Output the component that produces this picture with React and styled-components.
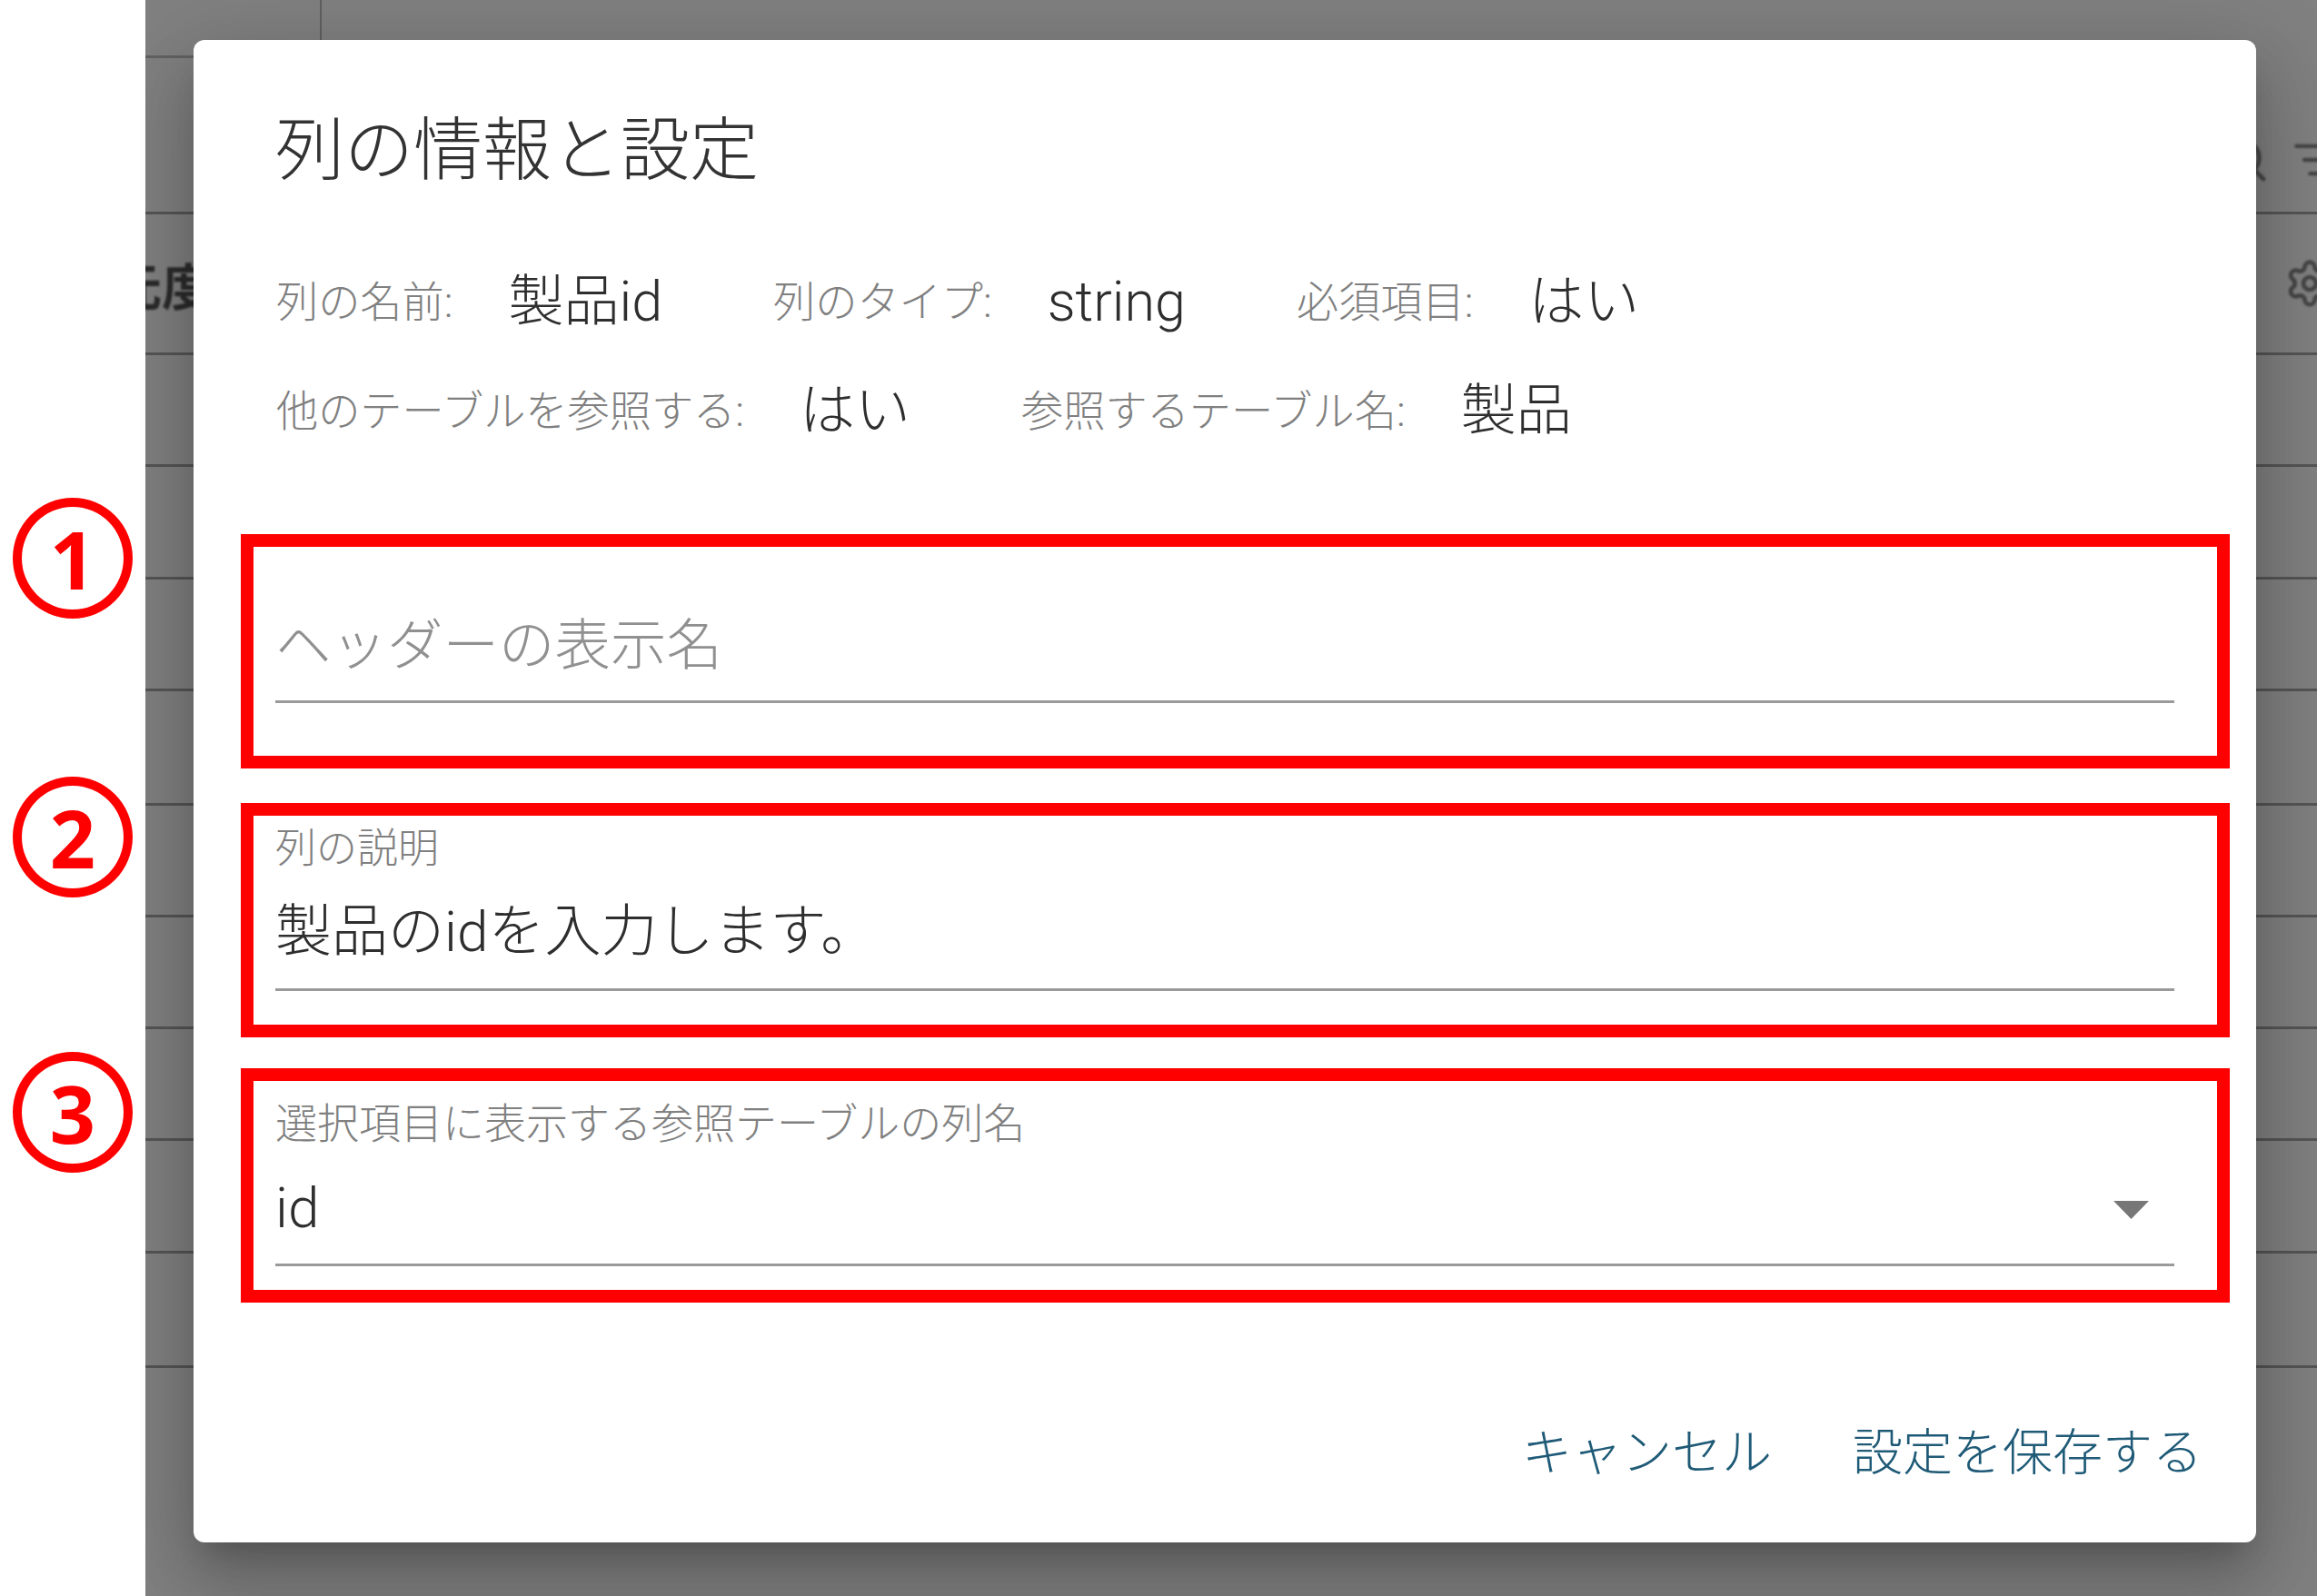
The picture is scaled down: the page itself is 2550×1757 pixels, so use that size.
import React from "react";
import styled, { createGlobalStyle } from "styled-components";
import { Search, ListFilter, Settings } from "lucide-react";

const FONT = `Roboto, "Noto Sans CJK JP", sans-serif`;

const GlobalStyle = createGlobalStyle`
  html, body {
    margin: 0;
    padding: 0;
    background: #ffffff;
  }
  #root {
    width: 2550px;
    height: 1757px;
    overflow: hidden;
  }
`;

const infoRows = [
  [
    { label: "列の名前:", value: "製品id" },
    { label: "列のタイプ:", value: "string" },
    { label: "必須項目:", value: "はい" },
  ],
  [
    { label: "他のテーブルを参照する:", value: "はい" },
    { label: "参照するテーブル名:", value: "製品" },
  ],
];

// heights of the table rows behind the dialog
const rowHeights = [123, 124, 123, 126, 123, 123, 123, 124, 126];

export default function App() {
  return (
    <Page>
      <GlobalStyle />
      <Markers>
        <Marker>1</Marker>
        <Marker $before={174}>2</Marker>
        <Marker $before={170}>3</Marker>
      </Markers>

      <Backdrop>
        <TopCell />
        <ToolRow>
          <ToolIcons>
            <Search size={56} strokeWidth={2} />
            <ListFilter size={52} strokeWidth={2} />
          </ToolIcons>
        </ToolRow>
        <HeaderRow>
          <HeaderText>元度</HeaderText>
          <GearIcon size={56} strokeWidth={2} />
        </HeaderRow>
        {rowHeights.map((h, i) => (
          <BlankRow key={i} $h={h} />
        ))}

        <Dialog>
          <Title>列の情報と設定</Title>

          <Info>
            {infoRows.map((row, i) => (
              <InfoRow key={i}>
                {row.map((item) => (
                  <InfoItem key={item.label}>
                    <InfoLabel>{item.label}</InfoLabel>
                    <InfoValue>{item.value}</InfoValue>
                  </InfoItem>
                ))}
              </InfoRow>
            ))}
          </Info>

          <Highlight>
            <Field $top={74} $bottom={25}>
              <Placeholder>ヘッダーの表示名</Placeholder>
            </Field>
          </Highlight>

          <Highlight $before={38}>
            <Field $top={12} $bottom={27}>
              <FieldLabel $after={31} $size={45}>
                列の説明
              </FieldLabel>
              <FieldValue>製品のidを入力します。</FieldValue>
            </Field>
          </Highlight>

          <Highlight $before={34}>
            <Field $top={22} $bottom={26}>
              <FieldLabel $after={33} $size={46}>
                選択項目に表示する参照テーブルの列名
              </FieldLabel>
              <SelectRow>
                <FieldValue>id</FieldValue>
                <Arrow viewBox="0 0 39 20">
                  <polygon points="0,0 39,0 19.5,20" />
                </Arrow>
              </SelectRow>
            </Field>
          </Highlight>

          <Actions>
            <ActionButton>キャンセル</ActionButton>
            <ActionButton>設定を保存する</ActionButton>
          </Actions>
        </Dialog>
      </Backdrop>
    </Page>
  );
}

const Page = styled.div`
  display: flex;
  width: 2550px;
  height: 1757px;
  font-family: ${FONT};
`;

const Markers = styled.div`
  flex: 0 0 160px;
  box-sizing: border-box;
  display: flex;
  flex-direction: column;
  padding: 548px 0 0 14px;
`;

const Marker = styled.div`
  box-sizing: border-box;
  width: 132px;
  height: 133px;
  margin-top: ${(p) => p.$before || 0}px;
  border: 10px solid #ff0000;
  border-radius: 50%;
  display: flex;
  align-items: center;
  justify-content: center;
  color: #ff0000;
  font-family: "Noto Sans", sans-serif;
  font-size: 88px;
  font-weight: 700;
  line-height: 1;
`;

const Backdrop = styled.div`
  position: relative;
  flex: 1;
  overflow: hidden;
  background: #808080;
`;

const TopCell = styled.div`
  box-sizing: border-box;
  width: 194px;
  height: 64px;
  border-right: 2px solid #5f5f5f;
  border-bottom: 3px solid #626262;
`;

const ToolRow = styled.div`
  box-sizing: border-box;
  height: 172px;
  display: flex;
  justify-content: flex-end;
  align-items: flex-end;
  padding-bottom: 29px;
  border-bottom: 3px solid #555555;
`;

const ToolIcons = styled.div`
  display: flex;
  align-items: center;
  gap: 25px;
  margin-right: -25px;
  color: #454545;
  filter: blur(1px);
`;

const HeaderRow = styled.div`
  box-sizing: border-box;
  height: 155px;
  display: flex;
  justify-content: space-between;
  align-items: center;
  border-bottom: 3px solid #555555;
`;

const HeaderText = styled.div`
  margin-left: -37px;
  color: #2b2b2b;
  font-size: 55px;
  font-weight: 700;
  filter: blur(0.8px);
`;

const GearIcon = styled(Settings)`
  margin-right: -20px;
  color: #454545;
  filter: blur(1px);
`;

const BlankRow = styled.div`
  box-sizing: border-box;
  height: ${(p) => p.$h}px;
  border-bottom: 3px solid #555555;
`;

const Dialog = styled.div`
  position: absolute;
  left: 53px;
  top: 44px;
  box-sizing: border-box;
  width: 2270px;
  height: 1654px;
  padding: 77px 29px 0 52px;
  background: #ffffff;
  border-radius: 12px;
  box-shadow: 0 22px 30px -14px rgba(0, 0, 0, 0.2),
    0 48px 76px 6px rgba(0, 0, 0, 0.14), 0 18px 92px 16px rgba(0, 0, 0, 0.12);
`;

const Title = styled.h2`
  margin: 0 0 0 38px;
  color: #333333;
  font-size: 76px;
  font-weight: 300;
  line-height: 90px;
`;

const Info = styled.div`
  display: flex;
  flex-direction: column;
  gap: 60px;
  margin: 87px 0 110px 39px;
`;

const InfoRow = styled.div`
  display: flex;
  gap: 122px;
`;

const InfoItem = styled.div`
  display: flex;
  align-items: flex-start;
  gap: 61px;
  height: 60px;
  line-height: 60px;
`;

const InfoLabel = styled.span`
  margin-top: 5px;
  color: #808080;
  font-size: 46.2px;
  font-weight: 300;
`;

const InfoValue = styled.span`
  margin-top: 4px;
  color: #2e2e2e;
  font-size: 61px;
  font-weight: 300;
`;

const Highlight = styled.div`
  box-sizing: border-box;
  height: 258px;
  margin-top: ${(p) => p.$before || 0}px;
  padding: 0 47px 0 24px;
  border: 14px solid #ff0000;
`;

const Field = styled.div`
  padding: ${(p) => p.$top}px 0 ${(p) => p.$bottom}px;
  border-bottom: 3px solid #9a9a9a;
`;

const Placeholder = styled.div`
  color: #909090;
  font-size: 61.5px;
  font-weight: 300;
  line-height: 70px;
`;

const FieldLabel = styled.div`
  margin-bottom: ${(p) => p.$after}px;
  color: #808080;
  font-size: ${(p) => p.$size}px;
  font-weight: 300;
  line-height: 50px;
`;

const FieldValue = styled.div`
  color: #2e2e2e;
  font-size: 62px;
  font-weight: 300;
  line-height: 70px;
`;

const SelectRow = styled.div`
  display: flex;
  justify-content: space-between;
  align-items: center;
`;

const Arrow = styled.svg`
  width: 39px;
  height: 20px;
  margin: 4px 28px 0 0;
  fill: #777777;
`;

const Actions = styled.div`
  display: flex;
  justify-content: flex-end;
  gap: 89px;
  margin-top: 130px;
  padding-right: 30px;
`;

const ActionButton = styled.button`
  padding: 0;
  border: none;
  background: none;
  color: #1f5a77;
  font-family: ${FONT};
  font-size: 55px;
  font-weight: 300;
  line-height: 70px;
`;
